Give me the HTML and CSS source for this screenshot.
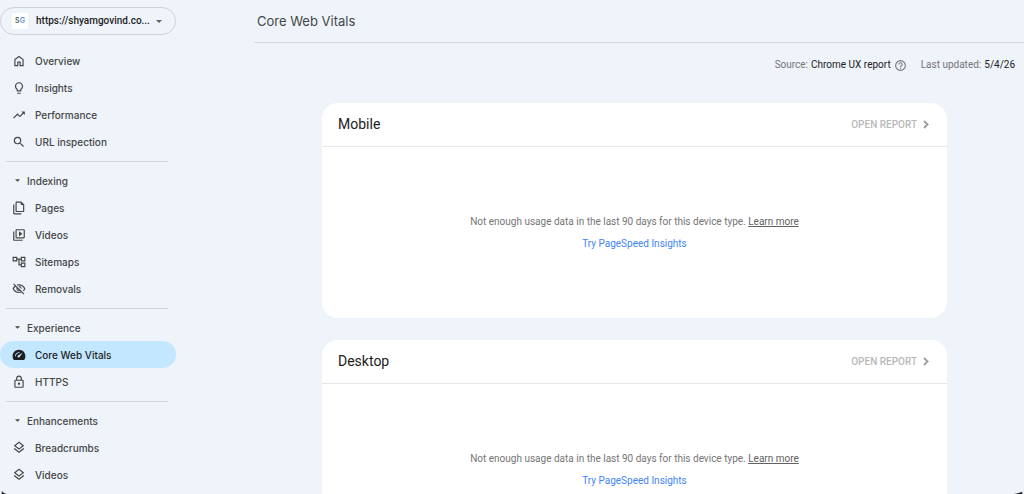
FILE: index.html
```html
<!DOCTYPE html>
<html lang="en">
<head>
<meta charset="utf-8">
<meta name="viewport" content="width=device-width, initial-scale=1">
<title>Core Web Vitals</title>
<link rel="stylesheet" href="styles.css">
</head>
<body>
<div class="app">
  <aside class="sidebar">
    <button class="property" type="button">
      <span class="favicon">S<span class="favicon-accent">G</span></span>
      <span class="property-name">https://shyamgovind.co...</span>
      <svg class="caret" viewBox="0 0 8 4"><path d="M0 0h8L4 4z"/></svg>
    </button>
    <nav class="nav">
      <ul class="group">
        <li><a class="item" href="#"><svg class="icon" viewBox="0 0 24 24"><path d="M6 19h3v-6h6v6h3v-9l-6-4.500L6 10zM4 21V9l8-6 8 6v12h-7v-6h-2v6z"/></svg>Overview</a></li>
        <li><a class="item" href="#"><svg class="icon" viewBox="0 0 24 24"><path d="M9 21c0 .55.45 1 1 1h4c.55 0 1-.45 1-1v-1H9zm3-19C8.140 2 5 5.140 5 9c0 2.380 1.190 4.470 3 5.740V17c0 .55.45 1 1 1h6c.55 0 1-.45 1-1v-2.260c1.810-1.270 3-3.360 3-5.740 0-3.860-3.140-7-7-7zm2.850 11.100-.85.6V16h-4v-2.300l-.85-.6A4.997 4.997 0 0 1 7 9c0-2.760 2.240-5 5-5s5 2.240 5 5c0 1.630-.8 3.160-2.150 4.100z"/></svg>Insights</a></li>
        <li><a class="item" href="#"><svg class="icon" viewBox="0 0 24 24"><path d="m16 6 2.290 2.290-4.880 4.880-4-4L2 16.590 3.410 18l6-6 4 4 6.300-6.290L22 12V6z"/></svg>Performance</a></li>
        <li><a class="item" href="#"><svg class="icon" viewBox="0 0 24 24"><path d="M15.500 14h-.79l-.28-.27A6.471 6.471 0 0 0 16 9.500 6.500 6.500 0 1 0 9.500 16c1.610 0 3.090-.59 4.230-1.570l.27.28v.79l5 4.990L20.490 19zm-6 0C7.010 14 5 11.990 5 9.500S7.010 5 9.500 5 14 7.010 14 9.500 11.990 14 9.500 14z"/></svg>URL inspection</a></li>
      </ul>
      <hr class="divider">
      <button class="heading" type="button"><svg class="fold" viewBox="0 0 6 3"><path d="M0 0h6L3 3z"/></svg>Indexing</button>
      <ul class="group">
        <li><a class="item" href="#"><svg class="icon" viewBox="0 0 24 24"><path fill-rule="evenodd" d="M16 1H8C6.900 1 6 1.900 6 3v14c0 1.100.9 2 2 2h11c1.100 0 2-.9 2-2V6zM8 17V3h7v4h4v10zM2 6h2v15h12v2H4c-1.100 0-2-.9-2-2z"/></svg>Pages</a></li>
        <li><a class="item" href="#"><svg class="icon" viewBox="0 0 24 24"><path d="M4 6H2v14c0 1.100.9 2 2 2h14v-2H4zm16-4H8c-1.100 0-2 .9-2 2v12c0 1.100.9 2 2 2h12c1.100 0 2-.9 2-2V4c0-1.100-.9-2-2-2zm0 14H8V4h12zM12 5.500v9l6-4.500z"/></svg>Videos</a></li>
        <li><a class="item" href="#"><svg class="icon" viewBox="0 0 24 24"><path fill-rule="evenodd" d="M1 3h8v3h6V3h8v8h-8V8h-2v8h2v-3h8v8h-8v-3h-4V8H9v3H1zM3 5v4h4V5zM17 5v4h4V5zM17 15v4h4v-4z"/></svg>Sitemaps</a></li>
        <li><a class="item" href="#"><svg class="icon" viewBox="0 0 24 24"><path d="M12 6c3.790 0 7.170 2.130 8.820 5.500-.59 1.220-1.420 2.270-2.410 3.120l1.410 1.410c1.390-1.230 2.490-2.770 3.180-4.530C21.270 7.110 17 4 12 4c-1.270 0-2.490.2-3.640.57l1.650 1.650C10.660 6.090 11.320 6 12 6zm-1.070 1.140L13 9.210c.57.25 1.030.71 1.280 1.280l2.070 2.070c.08-.34.14-.7.14-1.070C16.500 9.010 14.480 7 12 7c-.37 0-.72.05-1.070.14zM2.010 3.870l2.680 2.680A11.738 11.738 0 0 0 1 11.500C2.730 15.890 7 19 12 19c1.520 0 2.980-.29 4.320-.82l3.420 3.420 1.410-1.410L3.420 2.450zm7.500 7.500 2.610 2.610c-.04.01-.08.02-.12.02a2.500 2.500 0 0 1-2.490-2.630zm-3.400-3.400 1.750 1.750a4.600 4.600 0 0 0 5.910 5.910l.98.98c-.88.24-1.800.39-2.750.39-3.790 0-7.170-2.130-8.820-5.500.7-1.430 1.720-2.610 2.930-3.530z"/></svg>Removals</a></li>
      </ul>
      <hr class="divider">
      <button class="heading" type="button"><svg class="fold" viewBox="0 0 6 3"><path d="M0 0h6L3 3z"/></svg>Experience</button>
      <ul class="group">
        <li><a class="item selected" href="#" aria-current="page"><svg class="icon" viewBox="0 0 24 24"><path fill-rule="evenodd" d="M12 3C5.900 3 1 7.900 1 14c0 2 .6 4 1.600 5.500.4.600 1 1 1.700 1h15.400c.7 0 1.300-.4 1.700-1C22.400 18 23 16 23 14c0-6.100-4.900-11-11-11zm6 5-5 7.500c-.7 1-2 1.200-2.900.4s-.8-2.200.2-2.900zM5 14h1.500c0-3 2.500-5.500 5.500-5.500l1.700-1.200C9 6.300 5 9.500 5 14z"/></svg>Core Web Vitals</a></li>
        <li><a class="item" href="#"><svg class="icon" viewBox="0 0 24 24"><path fill-rule="evenodd" d="M18 8h-1V6A5 5 0 0 0 7 6v2H6c-1.100 0-2 .9-2 2v10c0 1.100.9 2 2 2h12c1.100 0 2-.9 2-2V10c0-1.100-.9-2-2-2zM9 6a3 3 0 0 1 6 0v2H9zm9 14H6V10h12zm-6-3a2 2 0 1 0 0-4 2 2 0 0 0 0 4z"/></svg>HTTPS</a></li>
      </ul>
      <hr class="divider">
      <button class="heading" type="button"><svg class="fold" viewBox="0 0 6 3"><path d="M0 0h6L3 3z"/></svg>Enhancements</button>
      <ul class="group">
        <li><a class="item" href="#"><svg class="icon" viewBox="0 0 24 24"><path fill-rule="evenodd" d="m12 1 9 7-9 7-9-7zM6.300 8l5.700 4.500L17.700 8 12 3.500zM3 13.500 4.600 12.200 12 18l7.400-5.800 1.600 1.300-9 7z"/></svg>Breadcrumbs</a></li>
        <li><a class="item" href="#"><svg class="icon" viewBox="0 0 24 24"><path fill-rule="evenodd" d="m12 1 9 7-9 7-9-7zM6.300 8l5.700 4.500L17.700 8 12 3.500zM3 13.500 4.600 12.200 12 18l7.400-5.800 1.600 1.300-9 7z"/></svg>Videos</a></li>
      </ul>
    </nav>
  </aside>
  <main class="main">
    <header class="title-bar"><h1 class="title">Core Web Vitals</h1></header>
    <div class="meta">
      <span class="meta-item">Source: <b class="meta-value">Chrome UX report</b>
        <svg class="help" viewBox="0 0 24 24"><path d="M11 18h2v-2h-2zm1-16a10 10 0 1 0 0 20 10 10 0 0 0 0-20zm0 18a8 8 0 1 1 0-16 8 8 0 0 1 0 16zm0-14a4 4 0 0 0-4 4h2c0-1.100.9-2 2-2s2 .9 2 2c0 2-3 1.750-3 5h2c0-2.250 3-2.500 3-5a4 4 0 0 0-4-4z"/></svg></span>
      <span class="meta-item">Last updated: <b class="meta-value">5/4/26</b></span>
    </div>
    <div class="cards">
      <section class="card">
        <header class="card-header">
          <h2 class="card-title">Mobile</h2>
          <button class="open" type="button" disabled>OPEN REPORT <svg class="chevron" viewBox="0 0 6 9"><path d="m1 1 3.500 3.500L1 8"/></svg></button>
        </header>
        <div class="card-body">
          <p class="message">Not enough usage data in the last 90 days for this device type. <a class="learn" href="#">Learn more</a></p>
          <a class="try" href="#">Try PageSpeed Insights</a>
        </div>
      </section>
      <section class="card">
        <header class="card-header">
          <h2 class="card-title">Desktop</h2>
          <button class="open" type="button" disabled>OPEN REPORT <svg class="chevron" viewBox="0 0 6 9"><path d="m1 1 3.500 3.500L1 8"/></svg></button>
        </header>
        <div class="card-body">
          <p class="message">Not enough usage data in the last 90 days for this device type. <a class="learn" href="#">Learn more</a></p>
          <a class="try" href="#">Try PageSpeed Insights</a>
        </div>
      </section>
    </div>
  </main>
</div>
<svg class="corner corner-left" viewBox="0 0 14 4"><path d="M0 0Q2 3 7 4H0z"/></svg>
<svg class="corner corner-right" viewBox="0 0 14 4"><path d="M14 1Q10 3 2 4h12z"/></svg>
</body>
</html>
```
FILE: styles.css
```css
* {
  box-sizing: border-box;
}

body {
  margin: 0;
  height: 100vh;
  overflow: hidden;
  background: #eff3fa;
  color: #444746;
  font: 10px/16px Roboto, "Liberation Sans", sans-serif;
}

button {
  border: 0;
  background: none;
  font: inherit;
  color: inherit;
}

svg {
  display: block;
  flex: none;
  fill: currentColor;
}

.app {
  display: grid;
  grid-template-columns: 176px minmax(0, 1fr);
  column-gap: 78px;
  height: 100%;
  overflow: hidden;
}

.sidebar {
  padding-top: 7px;
  font-family: Inter, "Liberation Sans", sans-serif;
  font-weight: 500;
}

.property {
  display: flex;
  align-items: center;
  width: 100%;
  height: 28px;
  padding: 0 13px 0 11px;
  border: 1px solid #d0d2d6;
  border-radius: 14px;
  color: #1f1f1f;
}

.favicon {
  width: 16px;
  height: 16px;
  margin-right: 8px;
  border-radius: 1px;
  background: #fff;
  color: #444;
  font-size: 7px;
  text-align: center;
}

.favicon-accent {
  color: #3d7fc4;
}

.property-name {
  flex: 1;
  font-family: Roboto, "Liberation Sans", sans-serif;
  text-align: left;
  white-space: nowrap;
}

.caret {
  width: 6px;
  height: 3px;
  color: #5f6368;
}

.nav {
  padding-top: 12px;
}

.group {
  margin: 0;
  padding: 0;
  list-style: none;
}

.item,
.heading {
  display: flex;
  align-items: center;
  width: 100%;
  height: 27px;
  color: #444746;
  text-decoration: none;
}

.item {
  gap: 9px;
  padding-left: 12px;
  border-radius: 14px;
}

.heading {
  gap: 7px;
  padding: 0 0 0 15px;
}

.item.selected {
  background: #c2e7ff;
  color: #1f1f1f;
}

.icon {
  width: 14px;
  height: 14px;
}

.fold {
  width: 5px;
  height: 3px;
}

.divider {
  height: 1px;
  margin: 6px 8px 5px 6px;
  border: 0;
  background: #d2d5da;
}

.title-bar {
  height: 43px;
  padding: 11px 3px 0;
  border-bottom: 1px solid #d6d9de;
}

.title {
  margin: 0;
  font: 400 13px/20px Inter, "Liberation Sans", sans-serif;
}

.meta {
  display: flex;
  justify-content: flex-end;
  gap: 14px;
  padding: 14px 9px 0 0;
  color: #757575;
}

.meta-item {
  display: flex;
  align-items: center;
  gap: 3px;
}

.meta-value {
  color: #212121;
  font-weight: 400;
}

.help {
  width: 13px;
  height: 13px;
}

.cards {
  display: grid;
  gap: 22px;
  padding: 30px 77px 0 68px;
}

.card {
  border-radius: 16px;
  background: #fff;
}

.card-header {
  display: flex;
  align-items: center;
  justify-content: space-between;
  height: 44px;
  padding: 0 18px 2px 16px;
  border-bottom: 1px solid #e6e7e9;
}

.card-title {
  margin: 0;
  color: #212121;
  font-size: 14px;
  font-weight: 400;
}

.open {
  display: flex;
  align-items: center;
  gap: 6px;
  padding: 2px 0 0;
  color: #b8b8b8;
  font-weight: 500;
}

.chevron {
  width: 6px;
  height: 9px;
  fill: none;
  stroke: #a0a0a0;
  stroke-width: 2;
}

.card-body {
  display: flex;
  flex-direction: column;
  align-items: center;
  gap: 6px;
  padding: 67px 16px 66px;
}

.message {
  margin: 0;
  color: #757575;
}

.learn {
  color: #616161;
}

.try {
  color: #4285f4;
  text-decoration: none;
}

.corner {
  position: absolute;
  bottom: 0;
  width: 14px;
  height: 3px;
  color: #222;
}

.corner-left {
  left: 0;
}

.corner-right {
  right: 0;
}
```
